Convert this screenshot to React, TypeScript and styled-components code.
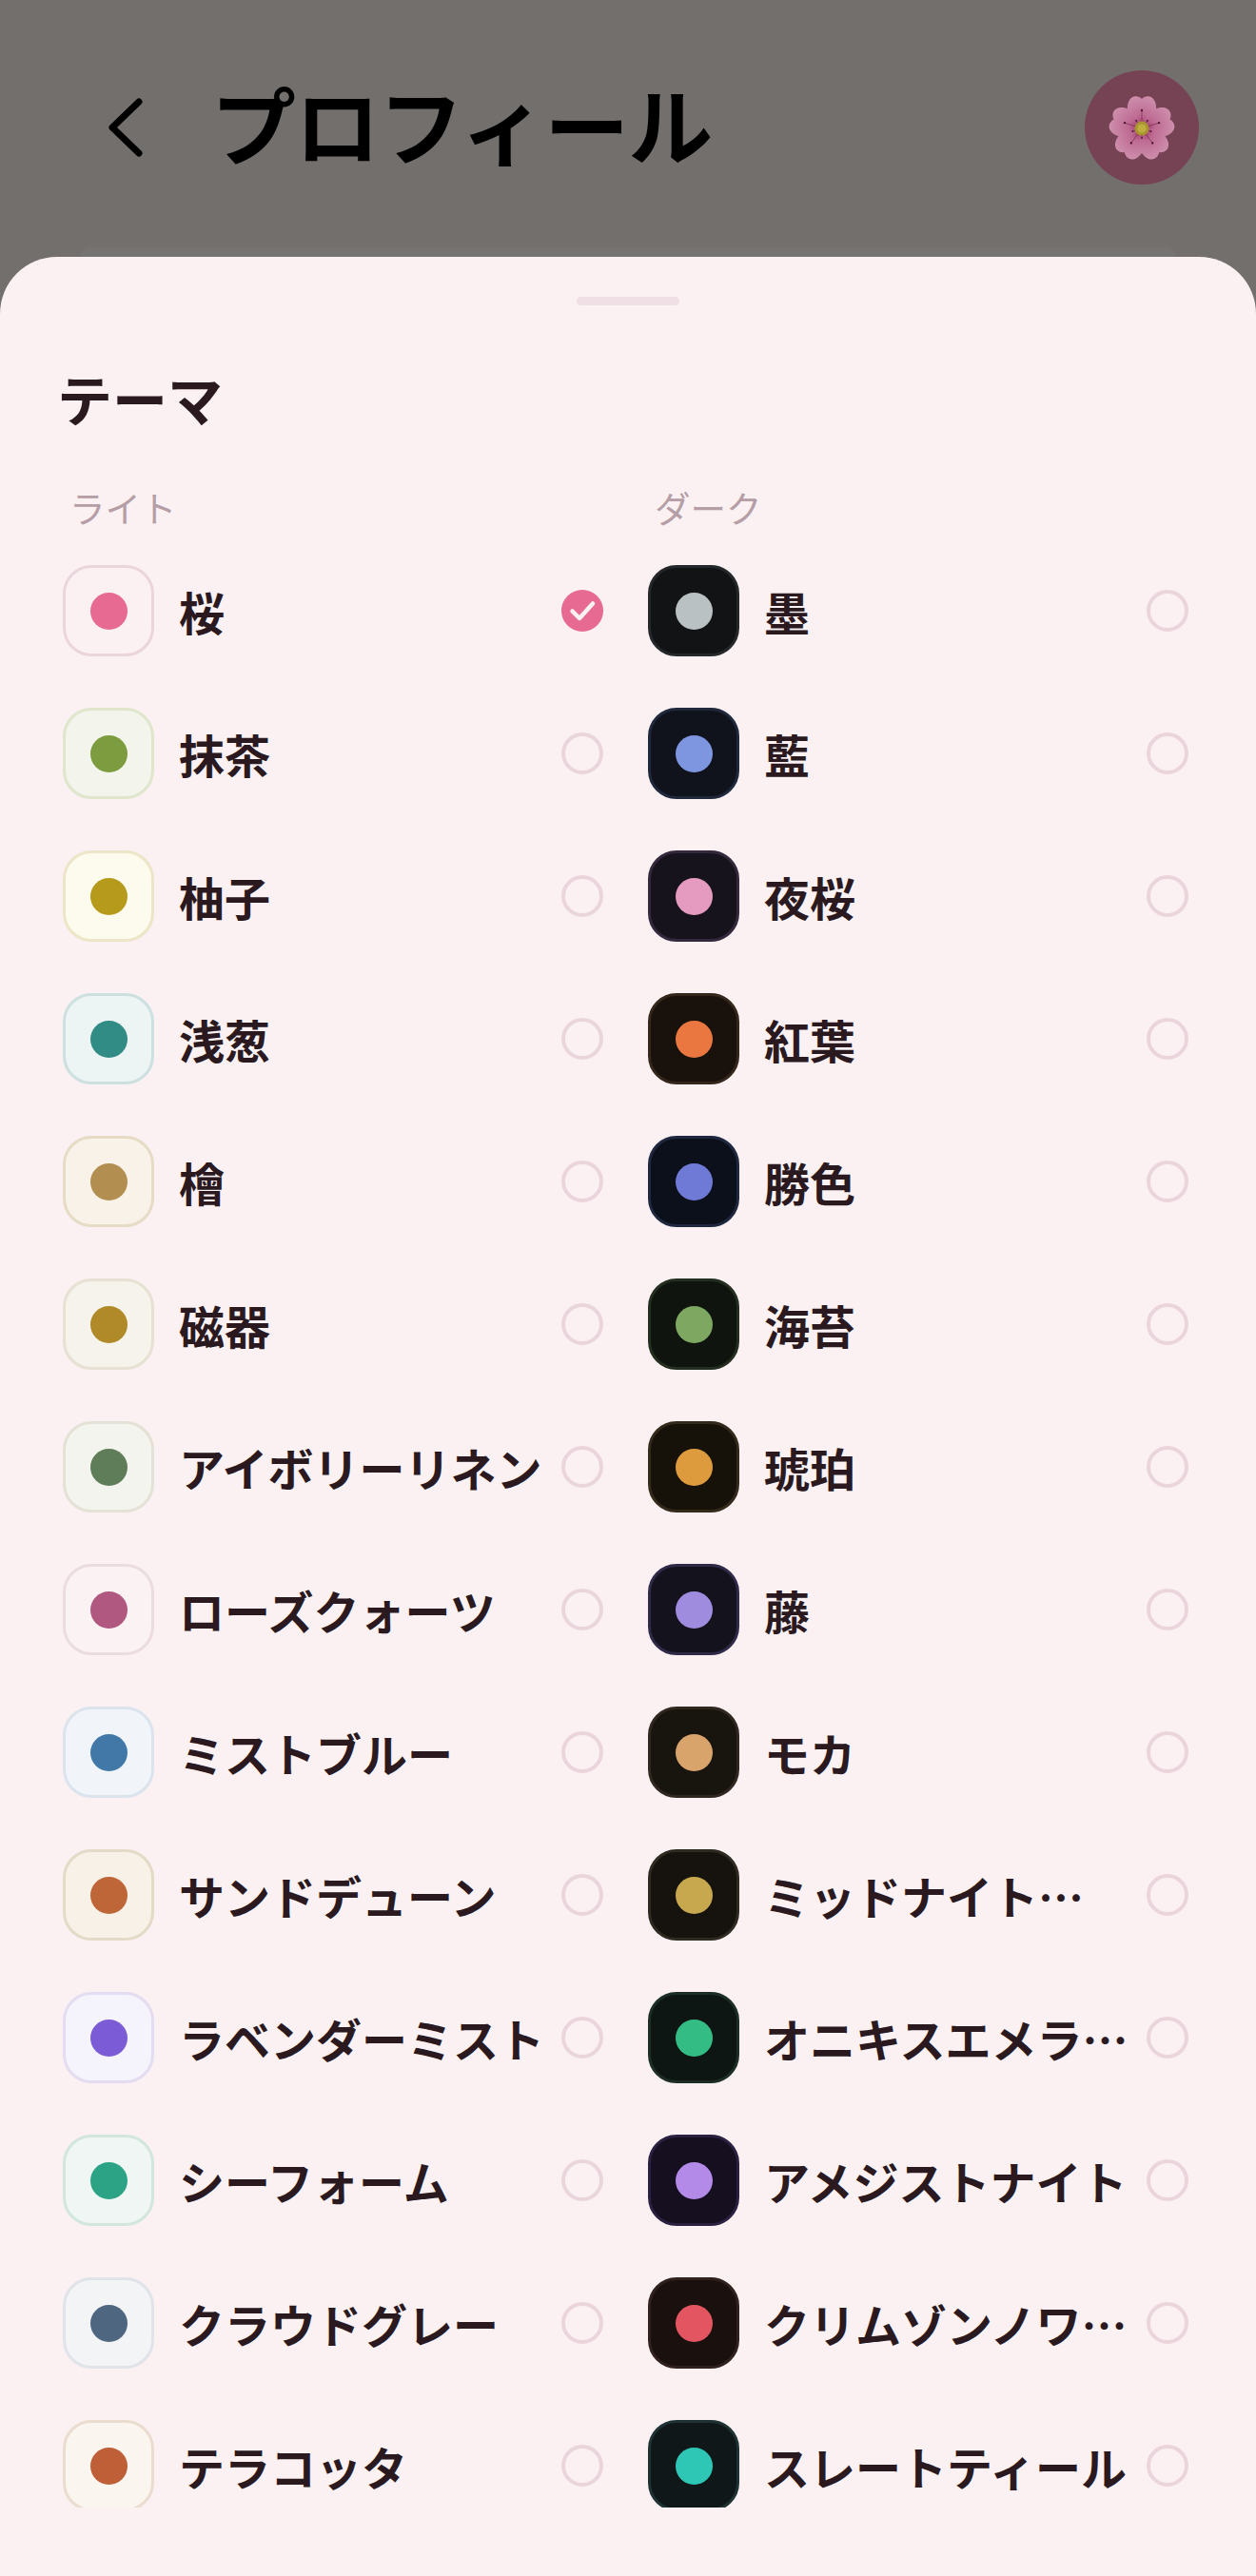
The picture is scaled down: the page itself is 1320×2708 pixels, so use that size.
import styled, { createGlobalStyle } from "styled-components";

type Theme = {
  name: string;
  bg: string;
  border: string;
  dot: string;
  selected?: boolean;
};

const lightThemes: Theme[] = [
  { name: "桜", bg: "#fbf1f3", border: "#ebd5dc", dot: "#e66a92", selected: true },
  { name: "抹茶", bg: "#f3f4ec", border: "#dfe6cc", dot: "#7d9c3f" },
  { name: "柚子", bg: "#fdfbee", border: "#ece5c8", dot: "#b69a1c" },
  { name: "浅葱", bg: "#edf5f4", border: "#cde0e0", dot: "#318c86" },
  { name: "檜", bg: "#f8f2e8", border: "#e6dcc6", dot: "#b28e50" },
  { name: "磁器", bg: "#f5f3ec", border: "#e6e1d2", dot: "#b08a28" },
  { name: "アイボリーリネン", bg: "#f4f4ee", border: "#e4e1d6", dot: "#5f7d58" },
  { name: "ローズクォーツ", bg: "#fbf3f3", border: "#ebdcdf", dot: "#b05880" },
  { name: "ミストブルー", bg: "#f1f5f9", border: "#dbe4ec", dot: "#4278a8" },
  { name: "サンドデューン", bg: "#f8f1e7", border: "#e4dac8", dot: "#bf6638" },
  { name: "ラベンダーミスト", bg: "#f5f3fb", border: "#e4dcf0", dot: "#7c5cd6" },
  { name: "シーフォーム", bg: "#eff6f3", border: "#d3e6de", dot: "#2ba384" },
  { name: "クラウドグレー", bg: "#f2f4f6", border: "#e0e4e8", dot: "#4f6680" },
  { name: "テラコッタ", bg: "#fbf5ef", border: "#eaddcf", dot: "#bf5f38" },
];

const darkThemes: Theme[] = [
  { name: "墨", bg: "#121314", border: "#25282a", dot: "#b9c1c3" },
  { name: "藍", bg: "#10131c", border: "#20283c", dot: "#7e95e0" },
  { name: "夜桜", bg: "#17131c", border: "#33283c", dot: "#e59abf" },
  { name: "紅葉", bg: "#18110c", border: "#35261c", dot: "#e9773f" },
  { name: "勝色", bg: "#0c101a", border: "#20283f", dot: "#6f79d6" },
  { name: "海苔", bg: "#0f150e", border: "#232e20", dot: "#7ea762" },
  { name: "琥珀", bg: "#16120a", border: "#342a1c", dot: "#dd9b3e" },
  { name: "藤", bg: "#14121c", border: "#2e2a48", dot: "#a08cdf" },
  { name: "モカ", bg: "#18140e", border: "#302820", dot: "#d9a46c" },
  { name: "ミッドナイト…", bg: "#16130e", border: "#2e2a22", dot: "#c8a84e" },
  { name: "オニキスエメラ…", bg: "#0d1612", border: "#1c2e26", dot: "#33bd85" },
  { name: "アメジストナイト", bg: "#150f20", border: "#2a2040", dot: "#b48ae8" },
  { name: "クリムゾンノワ…", bg: "#1a110f", border: "#30211e", dot: "#e45562" },
  { name: "スレートティール", bg: "#0f1718", border: "#1f3233", dot: "#2ec7b5" },
];

const ThemeOption = ({ theme }: { theme: Theme }) => (
  <Row>
    <Swatch $bg={theme.bg} $border={theme.border}>
      <Dot $color={theme.dot} />
    </Swatch>
    <Label>{theme.name}</Label>
    {theme.selected ? (
      <Checked>
        <svg width="44" height="44" viewBox="0 0 44 44" fill="none">
          <path
            d="M11.5 22.5 L19 30 L33 14.5"
            stroke="#fcf2f4"
            strokeWidth="4.5"
            strokeLinecap="round"
            strokeLinejoin="round"
          />
        </svg>
      </Checked>
    ) : (
      <Radio />
    )}
  </Row>
);

const petalAngles = [0, 72, 144, 216, 288];

const Blossom = () => (
  <svg width="70" height="70" viewBox="0 0 70 70">
    <defs>
      <radialGradient id="petal" cx="50%" cy="90%" r="90%">
        <stop offset="0%" stopColor="#a03a68" />
        <stop offset="35%" stopColor="#bd6a92" />
        <stop offset="100%" stopColor="#cd8dab" />
      </radialGradient>
    </defs>
    {petalAngles.map((angle) => (
      <path
        key={angle}
        transform={`rotate(${angle} 35 36)`}
        d="M35 36 C24 30 17 18 21 8 C24 1 31 1 35 5 C39 1 46 1 49 8 C53 18 46 30 35 36 Z"
        fill="url(#petal)"
      />
    ))}
    {petalAngles.map((angle) => (
      <g key={angle} transform={`rotate(${angle + 36} 35 36)`}>
        <line x1="35" y1="36" x2="35" y2="27" stroke="#7c2c4c" strokeWidth="0.7" />
        <circle cx="35" cy="26" r="1" fill="#4c1a30" />
      </g>
    ))}
    {petalAngles.map((angle) => (
      <g key={angle} transform={`rotate(${angle} 35 36)`}>
        <line x1="35" y1="36" x2="35" y2="17" stroke="#7c2c4c" strokeWidth="0.7" />
        <circle cx="35" cy="17" r="1.2" fill="#4c1a30" />
      </g>
    ))}
    <circle cx="35" cy="36" r="7.5" fill="#a8952f" />
    <circle cx="35" cy="36" r="4.5" fill="#bfae3f" />
  </svg>
);

const App = () => (
  <>
    <GlobalStyle />
    <Screen>
      <TopBar>
        <BackButton>
          <svg width="60" height="72" viewBox="0 0 60 72" fill="none">
            <path
              d="M44 9 L16 36 L44 63"
              stroke="#000"
              strokeWidth="7"
              strokeLinecap="round"
              strokeLinejoin="round"
            />
          </svg>
        </BackButton>
        <Title>プロフィール</Title>
        <Avatar>
          <Blossom />
        </Avatar>
      </TopBar>
      <BehindCard />
      <Sheet>
        <Handle />
        <SheetTitle>テーマ</SheetTitle>
        <Columns>
          <Column>
            <SectionLabel>ライト</SectionLabel>
          </Column>
          <Column>
            <SectionLabel>ダーク</SectionLabel>
          </Column>
        </Columns>
        <ListClip>
          <Columns>
            <Column>
              {lightThemes.map((t) => (
                <ThemeOption key={t.name} theme={t} />
              ))}
            </Column>
            <Column>
              {darkThemes.map((t) => (
                <ThemeOption key={t.name} theme={t} />
              ))}
            </Column>
          </Columns>
        </ListClip>
      </Sheet>
    </Screen>
  </>
);

export default App;

const GlobalStyle = createGlobalStyle`
  html, body {
    margin: 0;
    padding: 0;
    background: #726f6d;
  }
  * {
    box-sizing: border-box;
  }
`;

const Screen = styled.div`
  width: 1320px;
  height: 2708px;
  overflow: hidden;
  background: #726f6d;
  font-family: "Noto Sans CJK JP", "Noto Sans", sans-serif;
  display: flex;
  flex-direction: column;
`;

const TopBar = styled.div`
  height: 260px;
  flex-shrink: 0;
  padding: 74px 60px 0 102px;
  display: flex;
  align-items: flex-start;
`;

const BackButton = styled.div`
  width: 60px;
  height: 120px;
  display: flex;
  align-items: center;
  justify-content: center;
`;

const Title = styled.div`
  flex: 1;
  margin-left: 60px;
  height: 110px;
  line-height: 110px;
  font-size: 89px;
  font-weight: 700;
  color: #000;
  letter-spacing: -1px;
`;

const Avatar = styled.div`
  width: 120px;
  height: 120px;
  border-radius: 50%;
  background: #764355;
  display: flex;
  align-items: center;
  justify-content: center;
`;

const BehindCard = styled.div`
  height: 10px;
  flex-shrink: 0;
  margin: 0 84px;
  background: #757473;
  border-top: 1px solid #7a7170;
  border-radius: 30px 30px 0 0;
`;

const Sheet = styled.div`
  flex: 1;
  min-height: 0;
  background: #fbf1f3;
  border-radius: 60px 60px 0 0;
  padding: 42px 0 0;
  display: flex;
  flex-direction: column;
`;

const Handle = styled.div`
  width: 108px;
  height: 9px;
  border-radius: 5px;
  background: #f0e0e6;
  align-self: center;
  flex-shrink: 0;
`;

const SheetTitle = styled.div`
  margin: 57px 0 0 60px;
  font-size: 58px;
  line-height: 80px;
  font-weight: 700;
  color: #2a1a1f;
`;

const Columns = styled.div`
  display: grid;
  grid-template-columns: 568px 568px;
  column-gap: 47px;
  padding-left: 66px;
`;

const Column = styled.div`
  display: flex;
  flex-direction: column;
`;

const SectionLabel = styled.div`
  margin: 51px 0 0 7px;
  font-size: 37.5px;
  line-height: 48px;
  color: #b59ea5;
`;

const ListClip = styled.div`
  height: 2042px;
  margin-top: 37px;
  overflow: hidden;
`;

const Row = styled.div`
  height: 96px;
  margin-bottom: 54px;
  display: flex;
  align-items: center;
  flex-shrink: 0;
`;

const Swatch = styled.div<{ $bg: string; $border: string }>`
  width: 96px;
  height: 96px;
  flex-shrink: 0;
  border-radius: 30px;
  background: ${({ $bg }) => $bg};
  border: 3px solid ${({ $border }) => $border};
  display: flex;
  align-items: center;
  justify-content: center;
`;

const Dot = styled.div<{ $color: string }>`
  width: 39px;
  height: 39px;
  border-radius: 50%;
  background: ${({ $color }) => $color};
`;

const Label = styled.div`
  flex: 1;
  min-width: 0;
  margin-left: 26px;
  font-size: 48px;
  line-height: 64px;
  font-weight: 700;
  color: #2a1a1f;
  white-space: nowrap;
`;

const Radio = styled.div`
  width: 44px;
  height: 44px;
  flex-shrink: 0;
  border-radius: 50%;
  border: 4.5px solid #ebd5dc;
`;

const Checked = styled.div`
  width: 44px;
  height: 44px;
  flex-shrink: 0;
  border-radius: 50%;
  background: #e66a92;
`;
